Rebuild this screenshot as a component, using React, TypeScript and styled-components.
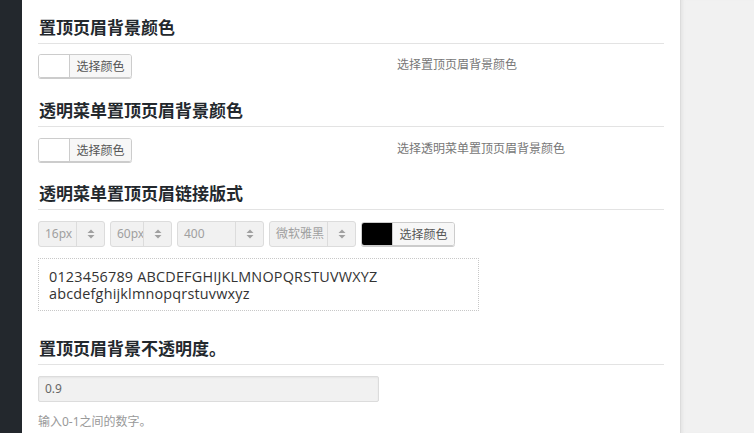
import React from "react";
import styled, { createGlobalStyle } from "styled-components";

const Global = createGlobalStyle`
  html, body { margin: 0; padding: 0; background: #f1f1f1; }
  body { font-family: "Noto Sans", "Noto Sans CJK SC", sans-serif; }
  * { box-sizing: border-box; }
`;

const Page = styled.div`
  display: flex;
  width: 754px;
  height: 433px;
  overflow: hidden;
`;

const Sidebar = styled.div`
  width: 22px;
  flex: none;
  background: #23282d;
`;

const Main = styled.div`
  width: 658px;
  flex: none;
  background: #fff;
  padding: 15px 16px 0 16px;
`;

const Aside = styled.div`
  flex: 1;
  background: #f1f1f1;
  border-left: 1px solid #dcdcdc;
  box-shadow: inset 4px 0 3px -2px #e6e6e6;
`;

const Section = styled.section<{ $gap?: number }>`
  margin-top: ${(p) => p.$gap ?? 0}px;
`;

const Heading = styled.h3`
  margin: 0;
  height: 29px;
  padding: 0 0 4px 1px;
  line-height: 24px;
  font-size: 17px;
  font-weight: 700;
  color: #23282d;
  font-family: "Noto Sans CJK SC", sans-serif;
  border-bottom: 1px solid #e3e3e3;
  letter-spacing: 0;
`;

const Row = styled.div<{ $top?: number }>`
  display: flex;
  align-items: center;
  margin-top: ${(p) => p.$top ?? 10}px;
`;

const ColorPicker = styled.div`
  display: flex;
  height: 24px;
  border: 1px solid #ccc;
  border-radius: 3px;
  overflow: hidden;
  box-shadow: 0 1px 0 #ccc;
  flex: none;
`;

const Swatch = styled.span<{ $color: string }>`
  width: 31px;
  background: ${(p) => p.$color};
  border-right: 1px solid #ccc;
`;

const PickLabel = styled.span`
  width: 61px;
  background: #f7f7f7;
  color: #555;
  font-size: 12px;
  line-height: 22px;
  text-align: center;
  font-family: "Noto Sans CJK SC", sans-serif;
`;

const Desc = styled.span`
  align-self: flex-start;
  margin-left: 265px;
  margin-top: 1px;
  font-size: 12px;
  line-height: 17px;
  color: #777;
  font-family: "Noto Sans CJK SC", sans-serif;
`;

const Selects = styled.div`
  display: flex;
  gap: 5px;
  align-items: center;
`;

const Select = styled.div<{ $w: number }>`
  display: flex;
  width: ${(p) => p.$w}px;
  height: 26px;
  border: 1px solid #dcdcdc;
  border-radius: 3px;
  background: #f1f1f1;
  flex: none;
`;

const SelectText = styled.span`
  flex: 1;
  padding-left: 6px;
  font-size: 12px;
  line-height: 24px;
  color: #a0a0a0;
  font-family: "Noto Sans", "Noto Sans CJK SC", sans-serif;
  white-space: nowrap;
  overflow: hidden;
`;

const Arrow = styled.span`
  width: 28px;
  flex: none;
  border-left: 1px solid #dcdcdc;
  display: flex;
  align-items: center;
  justify-content: center;
`;

const Preview = styled.div`
  margin-top: 11px;
  width: 441px;
  height: 53px;
  border: 1px dotted #c8c8c8;
  padding: 9px 10px 0 10px;
  font-family: "Open Sans", sans-serif;
  font-size: 14.4px;
  letter-spacing: 0.2px;
  color: #333;
`;

const PreviewLine = styled.div`
  height: 17px;
  line-height: 17px;
  white-space: nowrap;
`;

const Input = styled.div`
  width: 341px;
  height: 26px;
  border: 1px solid #dcdcdc;
  border-radius: 2px;
  background: #f1f1f1;
  padding-left: 6px;
  font-size: 12px;
  line-height: 24px;
  color: #666;
  box-shadow: inset 0 1px 2px rgba(0,0,0,0.05);
`;

const Help = styled.p`
  margin: 10px 0 0 0;
  font-size: 12px;
  color: #999;
  font-family: "Noto Sans", "Noto Sans CJK SC", sans-serif;
`;

const UpDown = () => (
  <svg width="8" height="10" viewBox="0 0 8 10">
    <path d="M4 0.5 L7.5 4 L0.5 4 Z" fill="#a0a0a0" />
    <path d="M0.5 6 L7.5 6 L4 9.5 Z" fill="#a0a0a0" />
  </svg>
);

const Picker = ({ color }: { color: string }) => (
  <ColorPicker>
    <Swatch $color={color} />
    <PickLabel>选择颜色</PickLabel>
  </ColorPicker>
);

const selects = [
  { w: 67, t: "16px" },
  { w: 62, t: "60px" },
  { w: 87, t: "400" },
  { w: 87, t: "微软雅黑" },
];

export default function App() {
  return (
    <>
      <Global />
      <Page>
        <Sidebar />
        <Main>
          <Section>
            <Heading>置顶页眉背景颜色</Heading>
            <Row>
              <Picker color="#fff" />
              <Desc>选择置顶页眉背景颜色</Desc>
            </Row>
          </Section>
          <Section $gap={20}>
            <Heading>透明菜单置顶页眉背景颜色</Heading>
            <Row $top={11}>
              <Picker color="#fff" />
              <Desc>选择透明菜单置顶页眉背景颜色</Desc>
            </Row>
          </Section>
          <Section $gap={19}>
            <Heading>透明菜单置顶页眉链接版式</Heading>
            <Row $top={11}>
              <Selects>
                {selects.map((s) => (
                  <Select key={s.t} $w={s.w}>
                    <SelectText>{s.t}</SelectText>
                    <Arrow>
                      <UpDown />
                    </Arrow>
                  </Select>
                ))}
                <Picker color="#000" />
              </Selects>
            </Row>
            <Preview>
              <PreviewLine>0123456789 ABCDEFGHIJKLMNOPQRSTUVWXYZ</PreviewLine>
              <PreviewLine>abcdefghijklmnopqrstuvwxyz</PreviewLine>
            </Preview>
          </Section>
          <Section $gap={25}>
            <Heading>置顶页眉背景不透明度。</Heading>
            <Row $top={11}>
              <Input>0.9</Input>
            </Row>
            <Help>输入0-1之间的数字。</Help>
          </Section>
        </Main>
        <Aside />
      </Page>
    </>
  );
}
